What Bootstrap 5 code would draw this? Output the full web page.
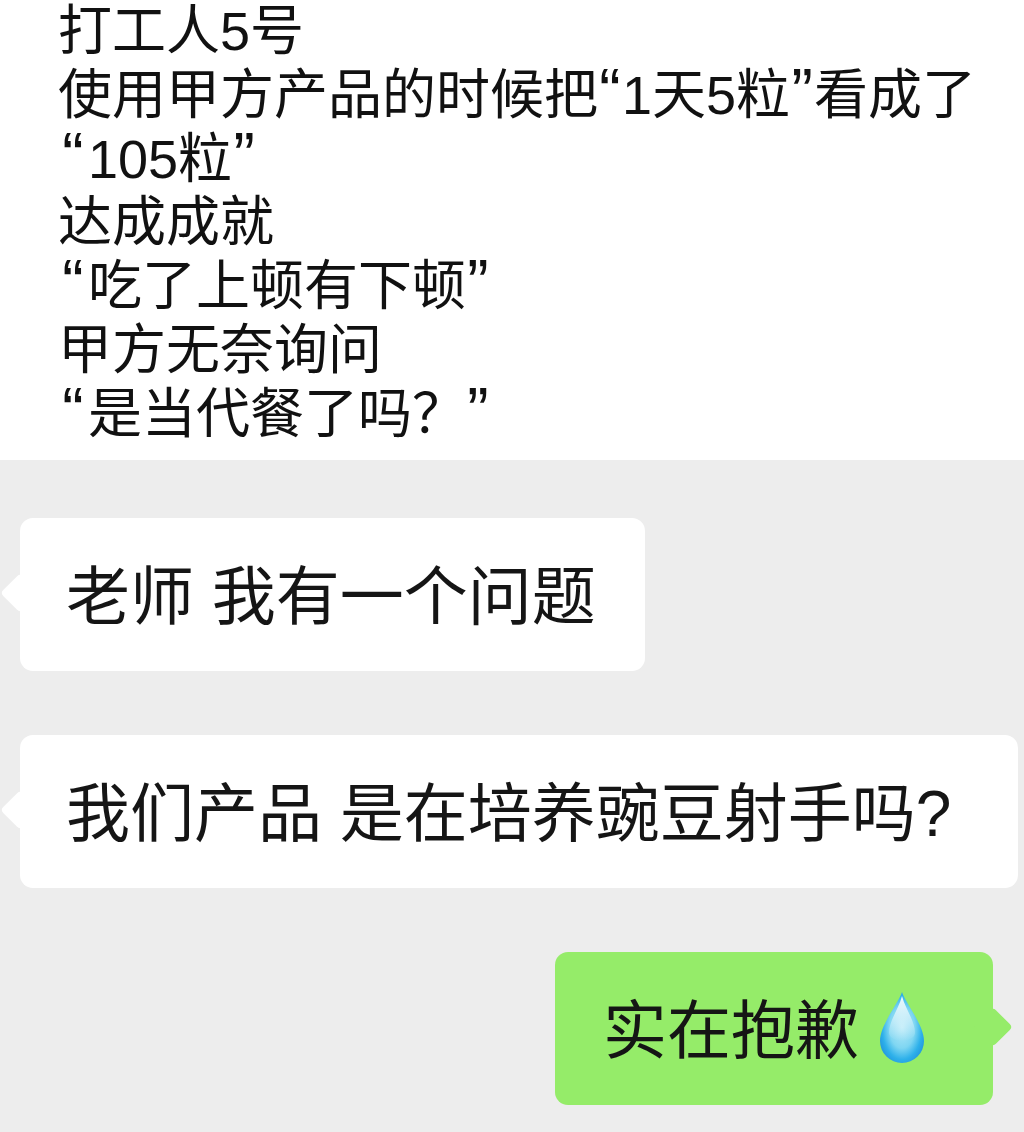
<!DOCTYPE html>
<html lang="zh-CN">
<head>
  <meta charset="UTF-8">
  <title>聊天记录</title>
  <meta name="viewport" content="width=device-width, initial-scale=1" />
  <link href="https://cdn.jsdelivr.net/npm/bootstrap@5.3.0/dist/css/bootstrap.min.css" rel="stylesheet">
  <style>
    body {
      margin: 0;
      background-color: #ededed;
      color: #111;
      font-family: "Liberation Sans", "Noto Sans CJK SC", sans-serif;
    }

    /* caption above the chat */
    .story {
      height: 460px;
      padding-left: 58px;
      background-color: #fff;
      font-size: 54px;
      line-height: 63.8px;
      overflow: hidden;
    }

    /* curly quotes run a bit larger than the latin font gives */
    .qm {
      display: inline-block;
      width: 24px;
      font-size: 64px;
      line-height: 0;
      text-align: center;
    }
    .qm-first { margin-left: 3px; margin-right: 3px; }

    .chat {
      height: 672px;
      padding: 58px 6px 0 20px;
      gap: 64px;
    }

    .bubble {
      position: relative;
      height: 153px;
      padding-top: 4px;
      border-radius: 13px;
      font-size: 64px;
      white-space: nowrap;
      color: #151515;
    }

    .bubble-in { background-color: #fff; padding-left: 46px; padding-right: 49px; }
    .bubble-wide { padding-right: 67px; }
    .bubble-out { background-color: #95ec69; padding-left: 48px; padding-right: 67px; margin-right: 25px; }

    /* little tail on the side of a bubble */
    .bubble::before {
      content: "";
      position: absolute;
      top: 58px;
      width: 34px;
      height: 34px;
      border-radius: 5px;
      transform: rotate(45deg) scale(.82);
    }
    .bubble-in::before { left: -17px; background-color: #fff; }
    .bubble-out::before { right: -17px; background-color: #95ec69; }

    .drop { margin-left: 19px; margin-top: -6px; flex-shrink: 0; }
  </style>
</head>
<body>

<div class="story">
  打工人5号<br>
  使用甲方产品的时候把<span class="qm">“</span>1天5粒<span class="qm">”</span>看成了<br>
  <span class="qm qm-first">“</span>105粒<span class="qm">”</span><br>
  达成成就<br>
  <span class="qm qm-first">“</span>吃了上顿有下顿<span class="qm">”</span><br>
  甲方无奈询问<br>
  <span class="qm qm-first">“</span>是当代餐了吗？<span class="qm">”</span>
</div>

<div class="chat d-flex flex-column align-items-start">
  <div class="bubble bubble-in d-flex align-items-center">老师 我有一个问题</div>
  <div class="bubble bubble-in bubble-wide d-flex align-items-center">我们产品 是在培养豌豆射手吗?</div>
  <div class="bubble bubble-out d-flex align-items-center align-self-end">
    实在抱歉
    <svg class="drop" width="48" height="74" viewBox="0 0 48 74">
      <defs>
        <radialGradient id="dropFill" cx="50%" cy="50%" r="58%">
          <stop offset="0" stop-color="#b5e9f8"/>
          <stop offset=".5" stop-color="#7fd6f2"/>
          <stop offset=".78" stop-color="#2db0ea"/>
          <stop offset="1" stop-color="#2394dc"/>
        </radialGradient>
        <linearGradient id="dropShine" x1="0" y1="0" x2="0" y2="1">
          <stop offset="0" stop-color="#fff" stop-opacity=".95"/>
          <stop offset="1" stop-color="#fff" stop-opacity="0"/>
        </linearGradient>
      </defs>
      <path d="M24 1C20 13 2 34 2 50a22 22 0 0 0 44 0C46 34 28 13 24 1Z" fill="url(#dropFill)"/>
      <path d="M24 5C21 17 11 30 11 42c0 4 6 8 13 8s13-4 13-8C37 30 27 17 24 5Z" fill="url(#dropShine)"/>
    </svg>
  </div>
</div>

</body>
</html>
